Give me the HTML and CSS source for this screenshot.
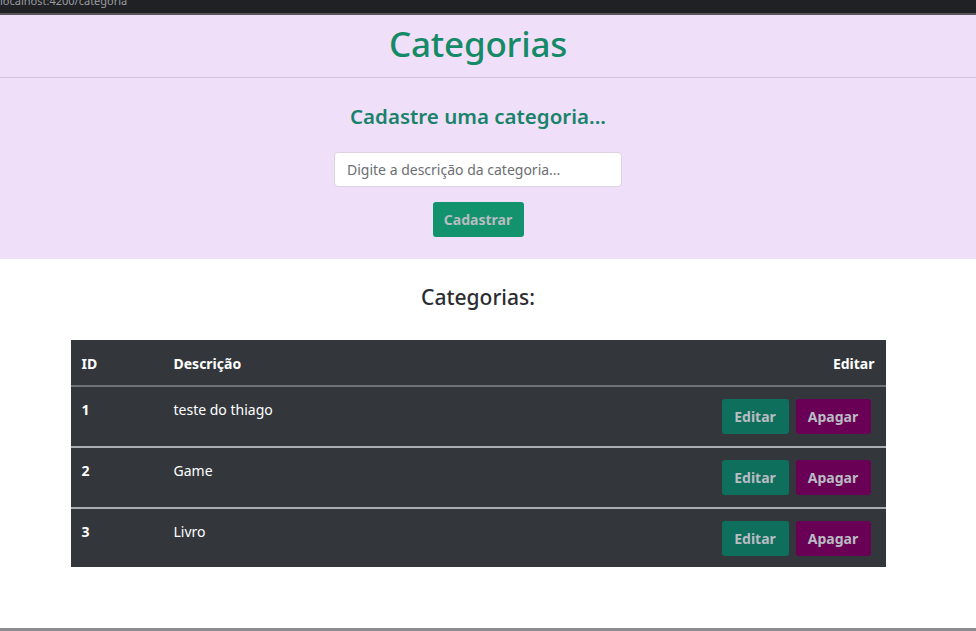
FILE: index.html
```html
<!DOCTYPE html>
<html lang="pt">
<head>
<meta charset="utf-8">
<title>Categorias</title>
<link rel="stylesheet" href="styles.css">
</head>
<body>
<div class="chrome"><span class="chrome-url">localhost:4200/categoria</span></div>
<header class="page-header">
  <h1>Categorias</h1>
</header>
<section class="form-section">
  <h3>Cadastre uma categoria...</h3>
  <input class="field" type="text" placeholder="Digite a descrição da categoria...">
  <button class="btn btn-save">Cadastrar</button>
</section>
<main class="list">
  <h4>Categorias:</h4>
  <table class="grid">
    <thead>
      <tr><th class="c-id">ID</th><th class="c-desc">Descrição</th><th class="c-act">Editar</th></tr>
    </thead>
    <tbody>
      <tr><td class="c-id">1</td><td class="c-desc">teste do thiago</td><td class="c-act"><button class="btn btn-edit">Editar</button><button class="btn btn-del">Apagar</button></td></tr>
      <tr><td class="c-id">2</td><td class="c-desc">Game</td><td class="c-act"><button class="btn btn-edit">Editar</button><button class="btn btn-del">Apagar</button></td></tr>
      <tr><td class="c-id">3</td><td class="c-desc">Livro</td><td class="c-act"><button class="btn btn-edit">Editar</button><button class="btn btn-del">Apagar</button></td></tr>
    </tbody>
  </table>
</main>
<div class="bottom-bar"></div>
</body>
</html>
```
FILE: styles.css
```css
* { box-sizing: border-box; }
html, body { margin: 0; padding: 0; height: 100%; }
body {
  font-family: "Noto Sans", "Open Sans", sans-serif;
  background: #ffffff;
  color: #212529;
  position: relative;
  overflow: hidden;
}
.chrome {
  height: 15px;
  background: #202124;
  border-bottom: 2px solid #55565a;
  overflow: hidden;
}
.chrome-url {
  display: block;
  margin-top: -7px;
  margin-left: 0;
  font-size: 11px;
  line-height: 16px;
  color: #9a9ca0;
}
.page-header {
  background: #efdff9;
  height: 63px;
  border-bottom: 1px solid #d3c5dd;
  display: flex;
  align-items: center;
  justify-content: center;
  padding: 0 20px 6px 0;
}
.page-header h1 {
  margin: 0;
  font-size: 35px;
  font-weight: 500;
  color: #158a66;
  letter-spacing: -0.2px;
}
.form-section {
  background: #efdff9;
  height: 181px;
  display: flex;
  flex-direction: column;
  align-items: center;
  padding: 24px 20px 0 0;
}
.form-section h3 {
  margin: 0 0 22px;
  font-size: 20.5px;
  font-weight: 600;
  color: #18836a;
}
.field {
  width: 288px;
  height: 35px;
  border: 1px solid #dcd2e2;
  border-radius: 4px;
  padding: 0 12px;
  font-family: inherit;
  font-size: 14px;
  background: #fff;
  margin-bottom: 15px;
}
.field::placeholder { color: #6c6f73; }
.btn {
  border: none;
  border-radius: 3px;
  font-family: inherit;
  font-weight: 700;
  font-size: 14px;
  color: #b9bcc3;
  cursor: pointer;
}
.btn-save {
  width: 91px;
  height: 35px;
  background: #12936d;
}
.list {
  padding: 24px 20px 0 0;
  display: flex;
  flex-direction: column;
  align-items: center;
}
.list h4 {
  margin: 0 0 29px;
  font-size: 21px;
  font-weight: 500;
  color: #2b2d31;
}
.grid {
  width: 815px;
  border-collapse: collapse;
  background: #33373c;
  color: #ffffff;
  font-size: 14px;
}
.grid th {
  height: 46px;
  text-align: left;
  font-weight: 700;
  padding: 2px 11px 0;
  border-bottom: 2px solid #6f7378;
}
.grid td {
  height: 61px;
  vertical-align: top;
  padding: 13px 11px 0;
  border-bottom: 2px solid #a9acb0;
}
.grid tbody tr:last-child td { border-bottom: none; height: 59px; }
.grid td.c-id { font-weight: 700; }
.c-id { width: 92px; }
.grid .c-act { text-align: right; }
.grid td.c-act { padding: 12px 15px 0 0; }
.btn-edit, .btn-del { height: 35px; vertical-align: top; }
.btn-edit { width: 67px; background: #0f6f5d; margin-right: 7px; }
.btn-del { width: 75px; background: #6a0055; }
.bottom-bar {
  position: absolute;
  left: 0; right: 0; bottom: 0;
  height: 3px;
  background: #8c8c8f;
}
```
